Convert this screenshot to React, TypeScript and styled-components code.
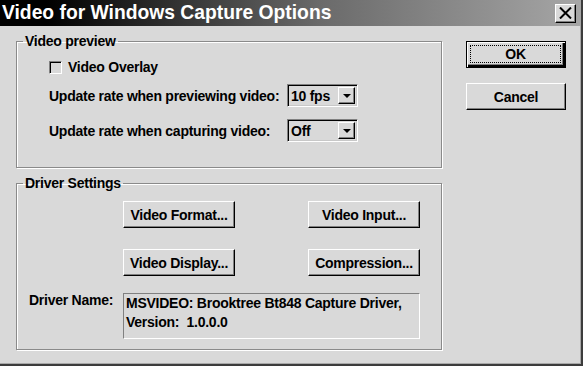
import * as React from 'react';
import styled, { createGlobalStyle } from 'styled-components';

const GlobalStyle = createGlobalStyle`
  html, body {
    margin: 0;
    padding: 0;
    background: #d9d9d9;
  }
  body {
    font-family: "Liberation Sans", Arial, sans-serif;
    font-weight: bold;
    font-size: 14px;
    letter-spacing: -0.25px;
    color: #000;
  }
`;

const App: React.FC = () => {
  return (
    <Window>
      <GlobalStyle />
      <TitleBar>
        <Title>Video for Windows Capture Options</Title>
        <CloseButton>
          <svg width="13" height="12" viewBox="0 0 13 12">
            <path d="M1 0.5 L12 11.5 M12 0.5 L1 11.5" stroke="#000" strokeWidth="2" />
          </svg>
        </CloseButton>
      </TitleBar>

      <Body>
        <LeftColumn>
          <Group>
            <Legend>Video preview</Legend>
            <PreviewContent>
              <CheckRow>
                <CheckBox />
                <span>Video Overlay</span>
              </CheckRow>
              <RateRow>
                <span>Update rate when previewing video:</span>
                <Combo>
                  <ComboText>10 fps</ComboText>
                  <ComboArrow><Triangle /></ComboArrow>
                </Combo>
              </RateRow>
              <RateRow>
                <span>Update rate when capturing video:</span>
                <Combo>
                  <ComboText>Off</ComboText>
                  <ComboArrow><Triangle /></ComboArrow>
                </Combo>
              </RateRow>
            </PreviewContent>
          </Group>

          <Group $gap>
            <Legend>Driver Settings</Legend>
            <DriverContent>
              <ButtonGrid>
                <Button>Video Format...</Button>
                <Button>Video Input...</Button>
                <Button>Video Display...</Button>
                <Button>Compression...</Button>
              </ButtonGrid>
              <DriverRow>
                <DriverLabel>Driver Name:</DriverLabel>
                <DriverBox>
                  MSVIDEO: Brooktree Bt848 Capture Driver,<br />
                  Version:&nbsp; 1.0.0.0
                </DriverBox>
              </DriverRow>
            </DriverContent>
          </Group>
        </LeftColumn>

        <RightColumn>
          <Button $default>
            <Focus>OK</Focus>
          </Button>
          <Button>Cancel</Button>
        </RightColumn>
      </Body>
    </Window>
  );
};

export default App;

const Window = styled.div`
  width: 583px;
  height: 366px;
  box-sizing: border-box;
  background: #d9d9d9;
  border-right: 2px solid #3c3c3c;
  border-bottom: 2px solid #3c3c3c;
  box-shadow: inset -1px -1px #a8a8a8;
  overflow: hidden;
`;

const TitleBar = styled.div`
  height: 26px;
  display: flex;
  align-items: center;
  justify-content: space-between;
  padding: 0 5px 0 2px;
  background: linear-gradient(to right, #000 0%, #000 8%, #6a6a6a 55%, #a6a6a6 100%);
`;

const Title = styled.div`
  color: #fff;
  font-size: 19.3px;
  letter-spacing: 0;
  line-height: 26px;
  font-weight: bold;
  white-space: nowrap;
`;

const CloseButton = styled.div`
  width: 21px;
  height: 19px;
  box-sizing: border-box;
  display: flex;
  align-items: center;
  justify-content: center;
  background: #d9d9d9;
  border-top: 1px solid #fff;
  border-left: 1px solid #fff;
  border-right: 1px solid #000;
  border-bottom: 1px solid #000;
  box-shadow: inset -1px -1px #808080;
`;

const Body = styled.div`
  display: flex;
  padding: 7px 0 0 16px;
  gap: 24px;
`;

const LeftColumn = styled.div`
  width: 426px;
  display: flex;
  flex-direction: column;
`;

const RightColumn = styled.div`
  width: 100px;
  padding-top: 8px;
  display: grid;
  grid-template-rows: 27px 27px;
  row-gap: 15px;
`;

const Group = styled.fieldset<{ $gap?: boolean }>`
  margin: ${p => (p.$gap ? '7px' : '0')} 0 0 0;
  padding: 0;
  min-width: 0;
  border: 1px solid #8a8a8a;
  box-shadow: inset 1px 1px #fff, 1px 1px #fff;
`;

const Legend = styled.legend`
  margin-left: 6px;
  padding: 0 2px;
  line-height: 16px;
`;

const PreviewContent = styled.div`
  padding: 10px 0 25px 32px;
  display: flex;
  flex-direction: column;
`;

const CheckRow = styled.div`
  display: flex;
  align-items: center;
  gap: 6px;
  height: 16px;
  margin-bottom: 9px;
`;

const CheckBox = styled.div`
  width: 13px;
  height: 13px;
  box-sizing: border-box;
  border-top: 1px solid #808080;
  border-left: 1px solid #808080;
  border-right: 1px solid #fff;
  border-bottom: 1px solid #fff;
  box-shadow: inset 1px 1px #000;
`;

const RateRow = styled.div`
  display: grid;
  grid-template-columns: 238px 71px;
  align-items: center;
  height: 23px;
  & + & {
    margin-top: 12px;
  }
`;

const Combo = styled.div`
  height: 23px;
  box-sizing: border-box;
  display: flex;
  align-items: center;
  justify-content: space-between;
  padding: 2px 2px 2px 3px;
  border-top: 1px solid #808080;
  border-left: 1px solid #808080;
  border-right: 1px solid #fff;
  border-bottom: 1px solid #fff;
  box-shadow: inset 1px 1px #000, inset -1px -1px #c8c8c8;
`;

const ComboText = styled.span`
  line-height: 16px;
`;

const ComboArrow = styled.div`
  width: 17px;
  height: 17px;
  box-sizing: border-box;
  display: flex;
  align-items: center;
  justify-content: center;
  border-top: 1px solid #fff;
  border-left: 1px solid #fff;
  border-right: 1px solid #000;
  border-bottom: 1px solid #000;
  box-shadow: inset -1px -1px #808080;
`;

const Triangle = styled.div`
  width: 0;
  height: 0;
  border-left: 4px solid transparent;
  border-right: 4px solid transparent;
  border-top: 4px solid #000;
`;

const DriverContent = styled.div`
  padding: 10px 0 10px 0;
  display: flex;
  flex-direction: column;
`;

const ButtonGrid = styled.div`
  display: grid;
  grid-template-columns: 112px 112px;
  grid-auto-rows: 27px;
  column-gap: 73px;
  row-gap: 21px;
  padding-left: 106px;
`;

const Button = styled.div<{ $default?: boolean }>`
  box-sizing: border-box;
  height: 27px;
  display: flex;
  align-items: center;
  justify-content: center;
  background: #d9d9d9;
  border-top: 1px solid #fff;
  border-left: 1px solid #fff;
  border-right: 1px solid #000;
  border-bottom: 1px solid #000;
  box-shadow: inset -1px -1px #808080;
  white-space: nowrap;
  ${p =>
    p.$default &&
    `
    border: 1px solid #000;
    box-shadow: inset 1px 1px #fff, inset -2px -2px #000, inset -3px -3px #808080;
    padding: 3px 4px 4px 3px;
  `}
`;

const Focus = styled.div`
  width: 100%;
  height: 100%;
  box-sizing: border-box;
  border: 1px dotted #000;
  display: flex;
  align-items: center;
  justify-content: center;
`;

const DriverRow = styled.div`
  display: grid;
  grid-template-columns: 106px 297px;
  align-items: start;
  margin-top: 17px;
`;

const DriverLabel = styled.div`
  padding-left: 12px;
  line-height: 16px;
  margin-top: -1px;
`;

const DriverBox = styled.div`
  height: 46px;
  box-sizing: border-box;
  padding: 0 2px;
  line-height: 19px;
  border-top: 1px solid #808080;
  border-left: 1px solid #808080;
  border-right: 1px solid #fff;
  border-bottom: 1px solid #fff;
  white-space: nowrap;
`;
